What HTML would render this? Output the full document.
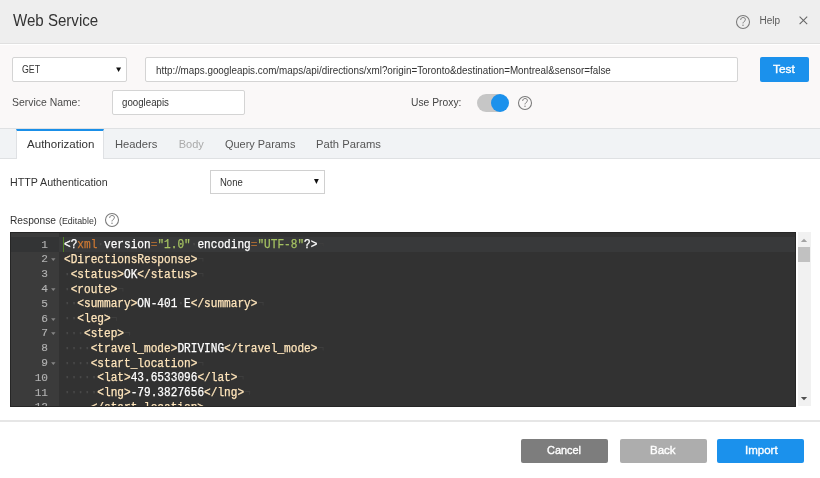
<!DOCTYPE html>
<html><head><meta charset="utf-8">
<style>
html,body{margin:0;padding:0;}
body{width:820px;height:478px;position:relative;overflow:hidden;background:#fff;font-family:"Liberation Sans",sans-serif;color:#333;}
.a{position:absolute;}
.t{position:absolute;white-space:nowrap;line-height:1;transform-origin:0 0;filter:grayscale(1);}
#hdr{left:0;top:0;width:820px;height:43px;background:#eeeeee;border-bottom:1.5px solid #e0e0e0;}
#form{left:0;top:44.5px;width:820px;height:83.5px;background:#faf8f8;}
.inp{position:absolute;background:#fff;border:1px solid #d4d4d4;border-radius:2px;box-sizing:border-box;}
.btn{position:absolute;border-radius:2px;color:#fff;font-weight:bold;text-align:center;}
#tabs{left:0;top:128px;width:820px;height:31px;background:#f1f3f5;border-top:1px solid #dfe1e3;border-bottom:1px solid #dfe1e3;box-sizing:border-box;}
#acttab{left:16px;top:129px;width:88px;height:30px;background:#fff;border-top:2px solid #1a8fe8;border-left:1px solid #dfe1e4;border-right:1px solid #dfe1e4;box-sizing:border-box;}
.help{position:absolute;border:1.3px solid #777;border-radius:50%;box-sizing:border-box;}
#ed{left:10px;top:232px;width:786px;height:175px;background:#323232;overflow:hidden;border:1px solid #262626;box-sizing:border-box;}
.code{position:absolute;left:52.7px;font-family:"Liberation Mono",monospace;font-size:12px;line-height:14.8px;height:14.8px;white-space:pre;color:#fff;transform-origin:0 0;transform:scaleX(0.926);-webkit-text-stroke:0.25px;}
.num{position:absolute;left:-0.7px;width:38px;font-family:"Liberation Mono",monospace;font-size:11.5px;line-height:14.8px;height:14.8px;color:#b2b2b2;text-align:right;transform-origin:100% 0;transform:scaleX(0.966);-webkit-text-stroke:0.15px;}
.tg{color:#FFE5BB}.kw{color:#CC7833}.st{color:#A5C261}.iv{color:#4a4a4a}.eol{color:#3e3e3e}.eq{color:#a86a34}.df{color:#fff}.pi{color:#fff}
</style></head><body>
<div id="hdr" class="a"></div>
<div class="t" style="left:13px;top:13px;font-size:16px;color:#333;transform:scaleX(0.942)">Web Service</div>
<svg class="a" style="left:735px;top:13.8px" width="16" height="16" viewBox="0 0 16 16"><circle cx="8" cy="8" r="6.5" fill="none" stroke="#7a7a7a" stroke-width="1.05"/><path d="M5.7 5.9C5.7 4.3 6.7 3.5 8.1 3.5C9.6 3.5 10.4 4.4 10.4 5.7C10.4 7.3 8 7.6 8 9.4" fill="none" stroke="#7a7a7a" stroke-width="1.0"/><circle cx="8" cy="11.3" r="0.7" fill="#7a7a7a"/></svg>
<div class="t" style="left:759.5px;top:16px;font-size:10px;color:#5a5a5a;">Help</div>
<svg class="a" style="left:798px;top:15px" width="11" height="11" viewBox="0 0 11 11"><path d="M1.6 1.6L9.2 9.2M9.2 1.6L1.6 9.2" stroke="#666" stroke-width="1.05"/></svg>

<div id="form" class="a"></div>
<div class="inp" style="left:12px;top:57px;width:115px;height:25px;"></div>
<div class="t" style="left:22px;top:65px;font-size:10px;color:#333;transform:scaleX(0.88)">GET</div>
<svg class="a" style="left:116px;top:67px" width="6" height="6" viewBox="0 0 6 6"><path d="M0.1 0.4H5.1L2.6 5Z" fill="#111"/></svg>
<div class="inp" style="left:145px;top:57px;width:593px;height:25px;"></div>
<div class="t" style="left:155.5px;top:65.5px;font-size:10px;color:#333;transform:scaleX(0.984)">http://maps.googleapis.com/maps/api/directions/xml?origin=Toronto&amp;destination=Montreal&amp;sensor=false</div>
<div class="btn" style="left:760px;top:57px;width:49px;height:25px;background:#1b91ec;"></div>
<div class="t" style="left:773.2px;top:63.8px;font-size:11.3px;color:#fff;-webkit-text-stroke:0.35px #fff;transform:scaleX(1.05)">Test</div>

<div class="t" style="left:11.8px;top:97px;font-size:11px;color:#4a4a4a;transform:scaleX(0.947)">Service Name:</div>
<div class="inp" style="left:112px;top:90px;width:133px;height:25px;"></div>
<div class="t" style="left:122px;top:98px;font-size:10px;color:#333;transform:scaleX(0.97)">googleapis</div>
<div class="t" style="left:410.5px;top:97px;font-size:11px;color:#444;transform:scaleX(0.937)">Use Proxy:</div>
<div class="a" style="left:477px;top:94px;width:30px;height:18px;border-radius:9px;background:#c6c6c6;"></div>
<div class="a" style="left:490.7px;top:94px;width:18.3px;height:18.3px;border-radius:50%;background:#1b91ec;"></div>
<svg class="a" style="left:517px;top:95.4px" width="16" height="16" viewBox="0 0 16 16"><circle cx="8" cy="8" r="6.5" fill="none" stroke="#7a7a7a" stroke-width="1.05"/><path d="M5.7 5.9C5.7 4.3 6.7 3.5 8.1 3.5C9.6 3.5 10.4 4.4 10.4 5.7C10.4 7.3 8 7.6 8 9.4" fill="none" stroke="#7a7a7a" stroke-width="1.0"/><circle cx="8" cy="11.3" r="0.7" fill="#7a7a7a"/></svg>

<div id="tabs" class="a"></div>
<div id="acttab" class="a"></div>
<div class="t" style="left:26.5px;top:139px;font-size:11px;color:#333;transform:scaleX(1.05)">Authorization</div>
<div class="t" style="left:115px;top:139px;font-size:11px;color:#555;transform:scaleX(1.02)">Headers</div>
<div class="t" style="left:178.7px;top:139px;font-size:11px;color:#aaa;transform:scaleX(1.0)">Body</div>
<div class="t" style="left:224.5px;top:139px;font-size:11px;color:#555;transform:scaleX(0.993)">Query Params</div>
<div class="t" style="left:316px;top:139px;font-size:11px;color:#555;transform:scaleX(1.02)">Path Params</div>

<div class="t" style="left:10px;top:176.5px;font-size:11px;color:#333;transform:scaleX(0.97)">HTTP Authentication</div>
<div class="a" style="left:210px;top:170px;width:115px;height:23.5px;background:#fff;border:1px solid #d0d0d0;box-sizing:border-box;"></div>
<div class="t" style="left:220.3px;top:178px;font-size:10px;color:#333;transform:scaleX(0.95)">None</div>
<svg class="a" style="left:314px;top:179px" width="6" height="6" viewBox="0 0 6 6"><path d="M0 0.1H4.8L2.4 4.9Z" fill="#111"/></svg>

<div class="t" style="left:10px;top:215px;font-size:11px;color:#333;transform:scaleX(0.928)">Response</div>
<div class="t" style="left:59px;top:217px;font-size:9px;color:#333;transform:scaleX(0.98)">(Editable)</div>
<svg class="a" style="left:104px;top:212px" width="16" height="16" viewBox="0 0 16 16"><circle cx="8" cy="8" r="6.5" fill="none" stroke="#7a7a7a" stroke-width="1.05"/><path d="M5.7 5.9C5.7 4.3 6.7 3.5 8.1 3.5C9.6 3.5 10.4 4.4 10.4 5.7C10.4 7.3 8 7.6 8 9.4" fill="none" stroke="#7a7a7a" stroke-width="1.0"/><circle cx="8" cy="11.3" r="0.7" fill="#7a7a7a"/></svg>

<div id="ed" class="a">
<div class="a" style="left:0;top:0;width:48px;height:173px;background:#3b3b3b"></div>
<div class="a" style="left:0;top:3.8px;width:48px;height:14.8px;background:#333435"></div>
<div class="a" style="left:48px;top:3.8px;width:740px;height:14.8px;background:#38393a"></div>
<div class="num" style="top:4.60px">1</div>
<div class="code" style="top:5.20px"><span class="pi">&lt;?</span><span class="kw">xml</span><span class="iv">·</span><span class="df">version</span><span class="eq">=</span><span class="st">&quot;1.0&quot;</span><span class="iv">·</span><span class="df">encoding</span><span class="eq">=</span><span class="st">&quot;UTF-8&quot;</span><span class="pi">?&gt;</span><span class="eol">¬</span></div>
<div class="num" style="top:19.40px">2</div>
<svg class="a" style="left:40px;top:24.30px" width="5" height="4" viewBox="0 0 5 4"><path d="M0.1 1.2H4.5L2.3 3.9Z" fill="#858585"/></svg>
<div class="code" style="top:20.00px"><span class="tg">&lt;DirectionsResponse&gt;</span><span class="eol">¬</span></div>
<div class="num" style="top:34.20px">3</div>
<div class="code" style="top:34.80px"><span class="iv">·</span><span class="tg">&lt;status&gt;</span><span class="df">OK</span><span class="tg">&lt;/status&gt;</span><span class="eol">¬</span></div>
<div class="num" style="top:49.00px">4</div>
<svg class="a" style="left:40px;top:53.90px" width="5" height="4" viewBox="0 0 5 4"><path d="M0.1 1.2H4.5L2.3 3.9Z" fill="#858585"/></svg>
<div class="code" style="top:49.60px"><span class="iv">·</span><span class="tg">&lt;route&gt;</span><span class="eol">¬</span></div>
<div class="num" style="top:63.80px">5</div>
<div class="code" style="top:64.40px"><span class="iv">··</span><span class="tg">&lt;summary&gt;</span><span class="df">ON-401</span><span class="iv">·</span><span class="df">E</span><span class="tg">&lt;/summary&gt;</span><span class="eol">¬</span></div>
<div class="num" style="top:78.60px">6</div>
<svg class="a" style="left:40px;top:83.50px" width="5" height="4" viewBox="0 0 5 4"><path d="M0.1 1.2H4.5L2.3 3.9Z" fill="#858585"/></svg>
<div class="code" style="top:79.20px"><span class="iv">··</span><span class="tg">&lt;leg&gt;</span><span class="eol">¬</span></div>
<div class="num" style="top:93.40px">7</div>
<svg class="a" style="left:40px;top:98.30px" width="5" height="4" viewBox="0 0 5 4"><path d="M0.1 1.2H4.5L2.3 3.9Z" fill="#858585"/></svg>
<div class="code" style="top:94.00px"><span class="iv">···</span><span class="tg">&lt;step&gt;</span><span class="eol">¬</span></div>
<div class="num" style="top:108.20px">8</div>
<div class="code" style="top:108.80px"><span class="iv">····</span><span class="tg">&lt;travel_mode&gt;</span><span class="df">DRIVING</span><span class="tg">&lt;/travel_mode&gt;</span><span class="eol">¬</span></div>
<div class="num" style="top:123.00px">9</div>
<svg class="a" style="left:40px;top:127.90px" width="5" height="4" viewBox="0 0 5 4"><path d="M0.1 1.2H4.5L2.3 3.9Z" fill="#858585"/></svg>
<div class="code" style="top:123.60px"><span class="iv">····</span><span class="tg">&lt;start_location&gt;</span><span class="eol">¬</span></div>
<div class="num" style="top:137.80px">10</div>
<div class="code" style="top:138.40px"><span class="iv">·····</span><span class="tg">&lt;lat&gt;</span><span class="df">43.6533096</span><span class="tg">&lt;/lat&gt;</span><span class="eol">¬</span></div>
<div class="num" style="top:152.60px">11</div>
<div class="code" style="top:153.20px"><span class="iv">·····</span><span class="tg">&lt;lng&gt;</span><span class="df">-79.3827656</span><span class="tg">&lt;/lng&gt;</span><span class="eol">¬</span></div>
<div class="num" style="top:167.40px">12</div>
<div class="code" style="top:168.00px"><span class="iv">····</span><span class="tg">&lt;/start_location&gt;</span><span class="eol">¬</span></div>
<div class="num" style="top:182.20px">13</div>
<svg class="a" style="left:40px;top:187.10px" width="5" height="4" viewBox="0 0 5 4"><path d="M0.1 1.2H4.5L2.3 3.9Z" fill="#858585"/></svg>
<div class="code" style="top:182.80px"><span class="iv">····</span><span class="tg">&lt;end_location&gt;</span><span class="eol">¬</span></div>
<div class="a" style="left:52.4px;top:3.8px;width:1px;height:14.8px;background:#4f8125"></div>
</div>

<div class="a" style="left:798px;top:232px;width:12.5px;height:174px;background:#f1f1f1;"></div>
<div class="a" style="left:798px;top:247px;width:11.5px;height:15px;background:#c1c1c1;"></div>
<svg class="a" style="left:800px;top:238px" width="8" height="5" viewBox="0 0 8 5"><path d="M0.8 3.9H7.2L4 0.7Z" fill="#a3a3a3"/></svg>
<svg class="a" style="left:800px;top:396px" width="8" height="5" viewBox="0 0 8 5"><path d="M0.8 0.9H7.2L4 4.3Z" fill="#505050"/></svg>

<div class="a" style="left:0;top:420px;width:820px;height:2px;background:#e6e6e6;"></div>
<div class="btn" style="left:521px;top:439px;width:87px;height:24px;background:#7d7d7d;"></div>
<div class="t" style="left:547px;top:445px;font-size:11.5px;color:#fff;-webkit-text-stroke:0.35px #fff;transform:scaleX(0.95)">Cancel</div>
<div class="btn" style="left:620px;top:439px;width:87px;height:24px;background:#adadad;"></div>
<div class="t" style="left:650px;top:445px;font-size:11.5px;color:#fff;-webkit-text-stroke:0.35px #fff;transform:scaleX(1.0)">Back</div>
<div class="btn" style="left:717px;top:439px;width:87px;height:24px;background:#1b91ec;"></div>
<div class="t" style="left:745px;top:445px;font-size:11.5px;color:#fff;-webkit-text-stroke:0.35px #fff;transform:scaleX(1.0)">Import</div>
</body></html>
